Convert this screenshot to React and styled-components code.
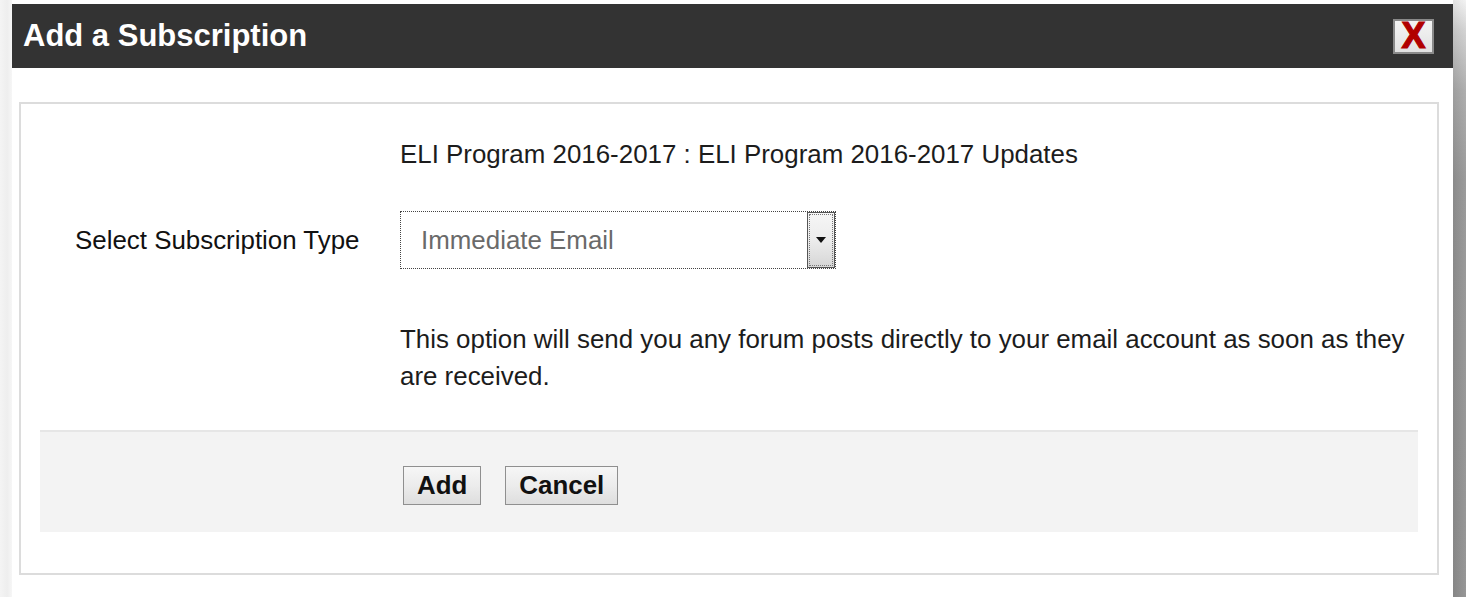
import React from "react";
import styled, { createGlobalStyle } from "styled-components";

const GlobalStyle = createGlobalStyle`
  html, body {
    margin: 0;
    padding: 0;
    background: #ffffff;
  }
  body {
    font-family: "Liberation Sans", Arial, sans-serif;
    color: #1a1a1a;
  }
`;

const Frame = styled.div`
  display: flex;
  width: 1466px;
  height: 597px;
  overflow: hidden;
  background: #ffffff;
`;

const LeftShade = styled.div`
  width: 12px;
  flex: none;
  background: linear-gradient(to right, #f4f4f4 0, #eeeeee 60%, #f6f6f6 100%);
`;

const RightShade = styled.div`
  width: 13px;
  flex: none;
  background:
    linear-gradient(to right, rgba(0, 0, 0, 0.06) 0, rgba(255, 255, 255, 0.08) 100%),
    linear-gradient(to bottom, #f2f2f2 0, #d0d0d0 30px, #a8a8a8 90px, #939393 180px, #8e8e8e 100%);
`;

const Dialog = styled.div`
  flex: 1;
  display: flex;
  flex-direction: column;
  margin-top: 4px;
  background: #ffffff;
`;

const TitleBar = styled.div`
  height: 64px;
  flex: none;
  display: flex;
  align-items: center;
  justify-content: space-between;
  padding: 0 19px 0 11px;
  background: #333333;
`;

const Title = styled.h1`
  margin: 0;
  font-family: "Liberation Sans", Arial, sans-serif;
  font-size: 31px;
  font-weight: bold;
  color: #ffffff;
`;

const CloseButton = styled.button`
  width: 41px;
  height: 35px;
  padding: 0;
  display: flex;
  align-items: center;
  justify-content: center;
  background: linear-gradient(to bottom, #f4f4f4, #e2e2e2);
  border: 2px solid #8a8a8a;
  font-family: "Liberation Sans", Arial, sans-serif;
  font-size: 36px;
  font-weight: 900;
  line-height: 1;
  color: #b10000;
  -webkit-text-stroke: 1.2px #b10000;
  cursor: pointer;
`;

const Body = styled.div`
  flex: 1;
  padding: 34px 14px 0 7px;
`;

const Panel = styled.div`
  border: 2px solid #dcdcdc;
  padding: 32px 19px 41px 19px;
`;

const Form = styled.div`
  display: grid;
  grid-template-columns: 325px 1fr;
  padding-left: 35px;
  font-size: 25.9px;
  line-height: 37px;
  color: #1c1c1c;
`;

const Label = styled.div`
  grid-row: 2;
  margin-top: 38px;
  align-self: center;
  color: #111111;
`;

const Field = styled.div`
  grid-column: 2;
  grid-row: ${(p) => p.$row || "auto"};
  margin-top: ${(p) => p.$top || 0}px;
  padding-right: ${(p) => p.$right || 0}px;
`;

const SelectBox = styled.div`
  box-sizing: border-box;
  width: 436px;
  height: 58px;
  display: flex;
  align-items: stretch;
  border: 1px dotted #444444;
  background: #ffffff;
`;

const SelectValue = styled.div`
  flex: 1;
  display: flex;
  align-items: center;
  padding-left: 20px;
  color: #6a6a6a;
`;

const SelectArrow = styled.div`
  width: 26px;
  display: flex;
  align-items: center;
  justify-content: center;
  border: 1px solid #555555;
  outline: 1px dotted #777777;
  outline-offset: -3px;
  background: linear-gradient(to bottom, #f6f6f6 0, #ececec 50%, #d6d6d6 100%);
`;

const Footer = styled.div`
  margin-top: 35px;
  height: 100px;
  box-sizing: content-box;
  border-top: 2px solid #e6e6e6;
  background: #f3f3f3;
  display: flex;
  align-items: flex-start;
  gap: 24px;
  padding-left: 363px;
`;

const ActionButton = styled.button`
  margin-top: 34px;
  height: 39px;
  padding: 0 13px;
  border: 1.5px solid #8f8f8f;
  background: linear-gradient(to bottom, #f6f6f6 0, #ececec 50%, #dedede 100%);
  font-family: "Liberation Sans", Arial, sans-serif;
  font-size: 25.9px;
  font-weight: bold;
  color: #111111;
  cursor: pointer;
`;

export default function App() {
  return (
    <>
      <GlobalStyle />
      <Frame>
        <LeftShade />
        <Dialog>
          <TitleBar>
            <Title>Add a Subscription</Title>
            <CloseButton aria-label="Close">X</CloseButton>
          </TitleBar>
          <Body>
            <Panel>
              <Form>
                <Field>ELI Program 2016-2017 : ELI Program 2016-2017 Updates</Field>
                <Label>Select Subscription Type</Label>
                <Field $row={2} $top={38}>
                  <SelectBox>
                    <SelectValue>Immediate Email</SelectValue>
                    <SelectArrow>
                      <svg width="10" height="6" viewBox="0 0 10 6">
                        <path d="M0 0 H10 L5 6 Z" fill="#111" />
                      </svg>
                    </SelectArrow>
                  </SelectBox>
                </Field>
                <Field $top={52} $right={12}>
                  This option will send you any forum posts directly to your email account as soon as they
                  are received.
                </Field>
              </Form>
              <Footer>
                <ActionButton>Add</ActionButton>
                <ActionButton>Cancel</ActionButton>
              </Footer>
            </Panel>
          </Body>
        </Dialog>
        <RightShade />
      </Frame>
    </>
  );
}
